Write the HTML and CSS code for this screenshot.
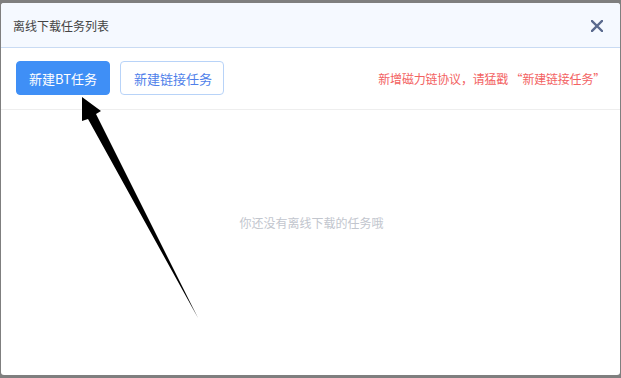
FILE: index.html
```html
<html>
<head>
<title>离线下载任务列表</title>
<meta charset="utf-8">
<link rel="stylesheet" href="styles.css">
</head>
<body>

<div id="dialog">
	<div id="dialog_head">
		<span id="dialog_title">离线下载任务列表</span>
		<svg id="close_btn" width="12" height="12" viewBox="0 0 12 12">
			<path d="M1 1 L11 11 M11 1 L1 11" stroke="#5a6a8e" stroke-width="2.4" stroke-linecap="square"/>
		</svg>
	</div>

	<div id="toolbar">
		<div id="btn_group">
			<span class="btn btn_primary">新建BT任务</span>
			<span class="btn btn_plain">新建链接任务</span>
		</div>
		<span id="notice">新增磁力链协议，请猛戳 “新建链接任务”</span>
	</div>

	<div id="task_list">
		<div id="empty_text">你还没有离线下载的任务哦</div>
	</div>

	<!-- hand drawn pointer over the page -->
	<svg id="arrow" width="621" height="378" viewBox="0 0 621 378">
		<polygon points="82,97 101,111 96,114 198,318 88,119 82,121" fill="#000"/>
	</svg>
</div>

</body>
</html>
```

FILE: styles.css
```css
body {
	margin: 0px;
	padding: 3px 1px 3px 1px;
	background: #7f7f7f;
	font-family: "Noto Sans CJK SC", "Liberation Sans", sans-serif;
}

#dialog {
	height: 372px;
	background: #fff;
	border-radius: 3px;
	overflow: hidden;
}

#dialog_head {
	display: flex;
	align-items: center;
	justify-content: space-between;
	height: 44px;
	padding: 0px 17px 0px 12px;
	background: #f5f9ff;
	border-bottom: 1px solid #c9dbf3;
}

#dialog_title {
	font-size: 12px;
	color: #444;
}

#close_btn {
	display: block;
	margin-top: 1px;
}

#toolbar {
	display: flex;
	align-items: center;
	justify-content: space-between;
	padding: 13px 15px 14px 15px;
	border-bottom: 1px solid #eeeeee;
}

#btn_group {
	display: flex;
	gap: 10px;
}

.btn {
	display: flex;
	align-items: center;
	box-sizing: border-box;
	height: 34px;
	padding: 0px 12px;
	font-size: 13px;
	border-radius: 4px;
	border: 1px solid #b8d3f8;
}

.btn_primary {
	background: #3f8ff6;
	border-color: #3f8ff6;
	color: #fff;
}

.btn_plain {
	background: #fff;
	color: #4f7fea;
	padding: 0px 11px 0px 13px;
}

#notice {
	font-size: 12px;
	letter-spacing: -0.2px;
	color: #f36262;
}

#task_list {
	padding-top: 105px;
	text-align: center;
}

#empty_text {
	font-size: 12px;
	line-height: 16px;
	color: #c2c6ce;
	padding-left: 2px;
}

#arrow {
	position: absolute;
	left: 0px;
	top: 0px;
}
```
